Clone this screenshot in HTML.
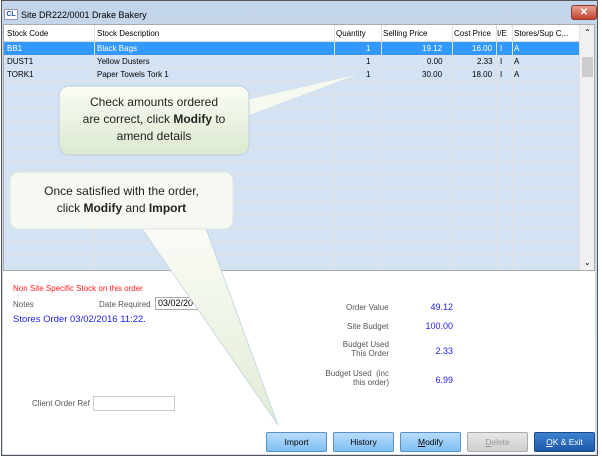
<!DOCTYPE html>
<html><head><meta charset="utf-8"><style>
*{margin:0;padding:0;box-sizing:border-box}
body{width:602px;height:458px;background:#fff;position:relative;overflow:hidden;font-family:"Liberation Sans",sans-serif;font-size:8px;color:#000}
.a{position:absolute}
.win{left:1px;top:0;width:597px;height:456px;border:1px solid #555;background:linear-gradient(#c3d5ea,#d0def0)}
.grid{left:3px;top:24px;width:592px;height:247px;background:#d4e3f4;border:1px solid #aaa;overflow:hidden}
.hdr{left:0;top:0;width:576px;height:17px;background:#fff;border-bottom:1px solid #ddd}
.vl{position:absolute;top:0;width:1px;height:247px;background:#e1e1e1}
.hl{position:absolute;left:0;width:576px;height:1px;background:#e1e1e1}
.t{position:absolute;white-space:nowrap}
.sb{left:576px;top:0;width:15px;height:245px;background:#f0f0f0}
.bottom{left:3px;top:271px;width:592px;height:183px;background:#fff}
.btn{position:absolute;top:432px;width:61px;height:20px;border:1px solid #5a8fc9;border-radius:2px;background:linear-gradient(#b8dcfb,#7fbff4);text-align:center;line-height:18px;font-size:8.5px}
.lbl{color:#555}
.val{color:#2222ee;font-size:9px;text-align:right;width:60px}
.call{border-radius:10px;text-align:center;font-size:12px;color:#222;line-height:17px}
</style></head><body>
<div class="a win"></div>
<div class="a" style="left:4px;top:9px;width:14px;height:11px;background:#fff;border:1px solid #99b;font-size:7px;font-weight:bold;color:#2255aa;line-height:9px;text-align:center">CL</div>
<div class="a" style="left:21px;top:10px;font-size:9px;white-space:nowrap">Site DR222/0001 Drake Bakery</div>
<div class="a" style="left:571px;top:5px;width:26px;height:15px;border-radius:3px;background:linear-gradient(#e8a090,#c0422e);border:1px solid #8a3a30;color:#fff;font-weight:bold;text-align:center;line-height:13px;font-size:10px">✕</div>
<div class="a grid">
 <div class="a hdr"></div>
 <div class="a" style="left:0;top:17px;width:576px;height:13px;background:#3399ff"></div>
 <div class="hl" style="top:30px"></div><div class="hl" style="top:43px"></div><div class="hl" style="top:56px"></div>
 <div class="hl" style="top:69px"></div><div class="hl" style="top:83px"></div><div class="hl" style="top:96px"></div><div class="hl" style="top:109px"></div><div class="hl" style="top:123px"></div><div class="hl" style="top:136px"></div><div class="hl" style="top:149px"></div><div class="hl" style="top:163px"></div><div class="hl" style="top:176px"></div><div class="hl" style="top:189px"></div><div class="hl" style="top:203px"></div><div class="hl" style="top:216px"></div><div class="hl" style="top:229px"></div>
 <div class="vl" style="left:90px"></div><div class="vl" style="left:330px"></div><div class="vl" style="left:377px"></div><div class="vl" style="left:448px"></div><div class="vl" style="left:492px"></div><div class="vl" style="left:508px"></div><div class="vl" style="left:575px"></div>
 <div class="t" style="left:3px;top:4px">Stock Code</div><div class="t" style="left:93px;top:4px">Stock Description</div><div class="t" style="left:332px;top:4px">Quantity</div><div class="t" style="left:379px;top:4px">Selling Price</div><div class="t" style="left:450px;top:4px">Cost Price</div><div class="t" style="left:493px;top:4px">I/E</div><div class="t" style="left:510px;top:4px">Stores/Sup C...</div>
 <div class="t" style="left:3px;top:19px;color:#fff">BB1</div><div class="t" style="left:93px;top:19px;color:#fff">Black Bags</div><div class="t" style="left:362px;top:19px;color:#fff">1</div><div class="t" style="left:418px;top:19px;color:#fff">19.12</div><div class="t" style="left:468px;top:19px;color:#fff">16.00</div><div class="t" style="left:496px;top:19px;color:#fff">I</div><div class="t" style="left:510px;top:19px;color:#fff">A</div>
 <div class="t" style="left:3px;top:32px">DUST1</div><div class="t" style="left:93px;top:32px">Yellow Dusters</div><div class="t" style="left:362px;top:32px">1</div><div class="t" style="left:423px;top:32px">0.00</div><div class="t" style="left:473px;top:32px">2.33</div><div class="t" style="left:496px;top:32px">I</div><div class="t" style="left:510px;top:32px">A</div>
 <div class="t" style="left:3px;top:45px">TORK1</div><div class="t" style="left:93px;top:45px">Paper Towels Tork 1</div><div class="t" style="left:362px;top:45px">1</div><div class="t" style="left:418px;top:45px">30.00</div><div class="t" style="left:468px;top:45px">18.00</div><div class="t" style="left:496px;top:45px">I</div><div class="t" style="left:510px;top:45px">A</div>
 <div class="a sb"><div class="t" style="left:4px;top:3px;font-size:8px">⌃</div><div class="a" style="left:2px;top:32px;width:11px;height:20px;background:#cdcdcd"></div><div class="t" style="left:4px;top:233px;font-size:8px">⌄</div></div>
</div>
<div class="a bottom"></div>
<div class="t" style="left:13px;top:284px;color:#ff2020">Non Site Specific Stock on this order</div>
<div class="t lbl" style="left:13px;top:300px">Notes</div>
<div class="t lbl" style="left:99px;top:300px">Date Required</div>
<div class="a" style="left:155px;top:297px;width:45px;height:13px;border:1px solid #aaa;font-size:9px;padding-left:2px;overflow:hidden;white-space:nowrap">03/02/20</div>
<div class="t" style="left:13px;top:314px;color:#2222ee;font-size:9.5px">Stores Order 03/02/2016 11:22.</div>
<div class="t lbl" style="left:32px;top:399px">Client Order Ref</div>
<div class="a" style="left:93px;top:396px;width:82px;height:15px;border:1px solid #ccc"></div>
<div class="t lbl" style="left:346px;top:303px">Order Value</div>
<div class="t lbl" style="left:347px;top:322px">Site Budget</div>
<div class="t lbl" style="left:327px;top:340px;text-align:right;width:62px;white-space:normal;line-height:9px">Budget Used This Order</div>
<div class="t lbl" style="left:320px;top:369px;text-align:right;width:69px;white-space:normal;line-height:9px">Budget Used&nbsp; (inc this order)</div>
<div class="t val" style="left:393px;top:302px">49.12</div>
<div class="t val" style="left:393px;top:321px">100.00</div>
<div class="t val" style="left:393px;top:346px">2.33</div>
<div class="t val" style="left:393px;top:375px">6.99</div>
<div class="btn" style="left:266px">Import</div>
<div class="btn" style="left:333px">History</div>
<div class="btn" style="left:400px"><u>M</u>odify</div>
<div class="btn" style="left:467px;background:linear-gradient(#e6e6e6,#cfcfcf);border-color:#aaa;color:#999"><u>D</u>elete</div>
<div class="btn" style="left:534px;background:linear-gradient(#3d82cf,#1c5aa8);border-color:#1a4a8a;color:#fff"><u>O</u>K &amp; Exit</div>
<svg class="a" style="left:0;top:0" width="602" height="458">
<defs><linearGradient id="g1" x1="0" y1="0" x2="0" y2="1"><stop offset="0" stop-color="#fafcf4"/><stop offset="1" stop-color="#dbe9cf"/></linearGradient>
<linearGradient id="g2" x1="0" y1="0" x2="0" y2="1"><stop offset="0" stop-color="#fafcf6"/><stop offset="1" stop-color="#e2ecd6"/></linearGradient></defs>
<polygon points="245,100 362,73 245,117" fill="#f6f9ef" stroke="#c9d8e8" stroke-width="0.5"/>
<rect x="59" y="86" width="190" height="69" rx="10" fill="url(#g1)" stroke="#b9cfe3"/>
<polygon points="140,226 205,226 278,425" fill="url(#g2)" stroke="#b9cfe3" stroke-width="0.7"/>
<rect x="10" y="172" width="223" height="57" rx="9" fill="#f6f9f1" stroke="#dde6dd"/>
</svg>
<div class="a call" style="left:59px;top:94px;width:190px">Check amounts ordered<br>are correct, click <b>Modify</b> to<br>amend details</div>
<div class="a call" style="left:10px;top:183px;width:223px">Once satisfied with the order,<br>click <b>Modify</b> and <b>Import</b></div>
</body></html>
